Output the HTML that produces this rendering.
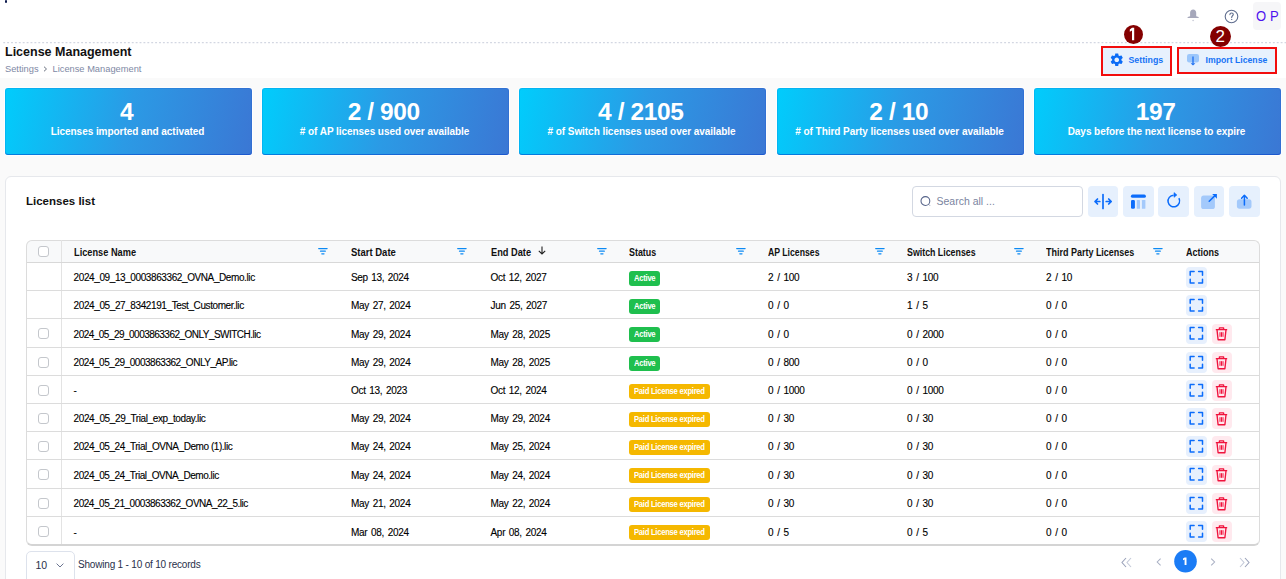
<!DOCTYPE html>
<html><head><meta charset="utf-8"><style>
*{box-sizing:border-box;margin:0;padding:0}
html,body{width:1286px;height:579px;overflow:hidden;background:#fff;font-family:"Liberation Sans",sans-serif;position:relative}
.a{position:absolute}
.ic{position:absolute;display:block}
#gray{position:absolute;left:0;top:78px;width:1286px;height:501px;background:#fafafa}
#dots{position:absolute;left:3.2px;top:42px;width:1283px;height:1.4px;background:repeating-linear-gradient(90deg,#d6dae4 0 2px,transparent 2px 3.889px)}
.title{position:absolute;left:5px;top:44.5px;font-size:12.5px;font-weight:700;color:#111;white-space:nowrap}
.crumb{position:absolute;top:63.8px;font-size:9.3px;color:#8089a5;white-space:nowrap}
.redbox{position:absolute;border:2px solid #f20d0d;background:#e7f1fd}
.btntxt{position:absolute;font-size:9.3px;font-weight:700;color:#1673f6;white-space:nowrap}
.num{position:absolute;border-radius:50%;background:#840000;color:#fff;text-align:center;font-weight:400}
.card{position:absolute;top:88px;width:247px;height:67px;border-radius:3px;background:linear-gradient(102deg,#00cdfc 0%,#2b9ae5 50%,#3b77d4 100%);color:#fff;text-align:center;box-shadow:0 -1px 0 rgba(0,60,200,.45) inset, 0 0 0 1px rgba(0,50,200,.12) inset, 0 0 0 1px rgba(255,255,255,.75)}
.big{position:absolute;left:-3.6px;right:0;top:11px;font-size:24.5px;font-weight:700;line-height:26px;letter-spacing:-0.4px}
.sub{position:absolute;left:-2px;right:0;top:38px;font-size:10px;font-weight:700;line-height:12px;letter-spacing:-0.05px}
#panel{position:absolute;left:5px;top:176px;width:1276px;height:420px;background:#fff;border:1px solid #e6e8ec;border-radius:6px}
.lt{position:absolute;left:26px;top:194.5px;font-size:11.5px;font-weight:700;color:#111;white-space:nowrap}
#search{position:absolute;left:912px;top:186px;width:170.5px;height:30.5px;border:1px solid #d3d8e2;border-radius:4px;background:#fff}
.tb{position:absolute;top:186px;width:30.5px;height:30.5px;border-radius:4px;background:#e6f0fd}
#table{position:absolute;left:26px;top:240px;width:1234px;height:306px;border:1px solid #dcdcdc;border-bottom:2px solid #d4d4d4;border-radius:6px;overflow:hidden}
#thead{position:absolute;left:26px;top:240px;width:1233px;height:22px;background:#f8f9fa;border-radius:6px 6px 0 0}
.vl{position:absolute;left:61px;top:240px;width:1px;height:304px;background:#e3e3e3}
.hl{position:absolute;left:27px;width:1232px;height:1px;background:#dcdcdc}
.hl0{position:absolute;left:27px;top:262px;width:1232px;height:1px;background:#d8d8d8}
.th{position:absolute;top:246px;font-size:10.5px;font-weight:700;color:#111;white-space:nowrap;line-height:13px;transform-origin:0 50%}
.td{position:absolute;font-size:10px;color:#000;-webkit-text-stroke:0.12px #000;white-space:nowrap;letter-spacing:-0.38px;line-height:13px}
.cb{position:absolute;width:11px;height:11.2px;border:1px solid #c4c7cc;border-radius:3px;background:#fff}
.badge{position:absolute;height:15.2px;border-radius:3px;color:#fff;font-size:8.6px;font-weight:700;line-height:15.2px;padding-left:4.6px;white-space:nowrap;letter-spacing:-0.3px}
.badge span{display:inline-block;transform:scaleX(0.89);transform-origin:0 50%}
.badge.g{background:#1fbf4e}
.badge.y{background:#f5b800}
.act{position:absolute;width:20.5px;height:20.5px;border-radius:4px;display:flex;align-items:center;justify-content:center}
.act.b{background:#e7f0fd}
.act.r{background:#ffe9ee}
#sel{position:absolute;left:26px;top:550.5px;width:48.5px;height:40px;border:1px solid #dde2ec;border-radius:5px;background:#fff}
.ft{position:absolute;font-size:10px;color:#28304a;white-space:nowrap;letter-spacing:-0.2px}
.pg{position:absolute;left:1174px;top:550.3px;width:22.8px;height:22.5px;border-radius:50%;background:#1b7cf5;color:#fff;font-size:11px;font-weight:700;text-align:center;line-height:22.5px}
</style></head><body>
<div class="a" style="left:4.5px;top:0;width:2px;height:2.5px;background:#0d1a4d;border-radius:1px"></div>
<!-- top icons -->
<svg class="ic" style="left:1187px;top:9px" width="12" height="13" viewBox="0 0 12 13"><path d="M6.15 0.6c1.8 0 3.05 1.3 3.05 3.2v3.5l2.3 0.6c0.4 0.1 0.4 1-0.1 1H0.9c-0.5 0-0.5-0.9-0.1-1l2.3-0.6V3.8c0-1.9 1.25-3.2 3.05-3.2z" fill="#a6a8bb"/><ellipse cx="6.1" cy="11.6" rx="1" ry="0.75" fill="#cfd1dc"/></svg>
<svg class="ic" style="left:1224.4px;top:9px" width="15" height="15" viewBox="0 0 15 15" fill="none"><circle cx="7.5" cy="7.5" r="6.3" stroke="#5f6d8e" stroke-width="1.1"/><path d="M5.9 5.6c0-1 0.7-1.6 1.7-1.6s1.7 0.6 1.7 1.5c0 1.2-1.6 1.3-1.6 2.7v0.3" stroke="#5f6d8e" stroke-width="1.1" stroke-linecap="round"/><circle cx="7.7" cy="10.4" r="0.65" fill="#5f6d8e"/></svg>
<div class="a" style="left:1253px;top:1.8px;width:28px;height:28px;background:#f6f6f8;border-radius:4px"></div>
<div class="a" style="left:1255.5px;top:7.5px;font-size:14.5px;color:#4f12ef;line-height:16px;transform:scaleX(0.9);transform-origin:0 0">O</div><div class="a" style="left:1270.2px;top:7.5px;font-size:14.5px;color:#4f12ef;line-height:16px;transform:scaleX(0.9);transform-origin:0 0">P</div>
<svg class="ic" style="left:0;top:42px" width="1286" height="2" viewBox="0 0 1286 2"><path d="M3.25 0h1.9v1.3h-1.9zM7.14 0h1.9v1.3h-1.9zM11.04 0h1.9v1.3h-1.9zM14.93 0h1.9v1.3h-1.9zM18.83 0h1.9v1.3h-1.9zM22.72 0h1.9v1.3h-1.9zM26.62 0h1.9v1.3h-1.9zM30.51 0h1.9v1.3h-1.9zM34.41 0h1.9v1.3h-1.9zM38.30 0h1.9v1.3h-1.9zM42.20 0h1.9v1.3h-1.9zM46.09 0h1.9v1.3h-1.9zM49.98 0h1.9v1.3h-1.9zM53.88 0h1.9v1.3h-1.9zM57.77 0h1.9v1.3h-1.9zM61.67 0h1.9v1.3h-1.9zM65.56 0h1.9v1.3h-1.9zM69.46 0h1.9v1.3h-1.9zM73.35 0h1.9v1.3h-1.9zM77.25 0h1.9v1.3h-1.9zM81.14 0h1.9v1.3h-1.9zM85.03 0h1.9v1.3h-1.9zM88.93 0h1.9v1.3h-1.9zM92.82 0h1.9v1.3h-1.9zM96.72 0h1.9v1.3h-1.9zM100.61 0h1.9v1.3h-1.9zM104.51 0h1.9v1.3h-1.9zM108.40 0h1.9v1.3h-1.9zM112.30 0h1.9v1.3h-1.9zM116.19 0h1.9v1.3h-1.9zM120.08 0h1.9v1.3h-1.9zM123.98 0h1.9v1.3h-1.9zM127.87 0h1.9v1.3h-1.9zM131.77 0h1.9v1.3h-1.9zM135.66 0h1.9v1.3h-1.9zM139.56 0h1.9v1.3h-1.9zM143.45 0h1.9v1.3h-1.9zM147.35 0h1.9v1.3h-1.9zM151.24 0h1.9v1.3h-1.9zM155.14 0h1.9v1.3h-1.9zM159.03 0h1.9v1.3h-1.9zM162.92 0h1.9v1.3h-1.9zM166.82 0h1.9v1.3h-1.9zM170.71 0h1.9v1.3h-1.9zM174.61 0h1.9v1.3h-1.9zM178.50 0h1.9v1.3h-1.9zM182.40 0h1.9v1.3h-1.9zM186.29 0h1.9v1.3h-1.9zM190.19 0h1.9v1.3h-1.9zM194.08 0h1.9v1.3h-1.9zM197.97 0h1.9v1.3h-1.9zM201.87 0h1.9v1.3h-1.9zM205.76 0h1.9v1.3h-1.9zM209.66 0h1.9v1.3h-1.9zM213.55 0h1.9v1.3h-1.9zM217.45 0h1.9v1.3h-1.9zM221.34 0h1.9v1.3h-1.9zM225.24 0h1.9v1.3h-1.9zM229.13 0h1.9v1.3h-1.9zM233.03 0h1.9v1.3h-1.9zM236.92 0h1.9v1.3h-1.9zM240.81 0h1.9v1.3h-1.9zM244.71 0h1.9v1.3h-1.9zM248.60 0h1.9v1.3h-1.9zM252.50 0h1.9v1.3h-1.9zM256.39 0h1.9v1.3h-1.9zM260.29 0h1.9v1.3h-1.9zM264.18 0h1.9v1.3h-1.9zM268.08 0h1.9v1.3h-1.9zM271.97 0h1.9v1.3h-1.9zM275.87 0h1.9v1.3h-1.9zM279.76 0h1.9v1.3h-1.9zM283.65 0h1.9v1.3h-1.9zM287.55 0h1.9v1.3h-1.9zM291.44 0h1.9v1.3h-1.9zM295.34 0h1.9v1.3h-1.9zM299.23 0h1.9v1.3h-1.9zM303.13 0h1.9v1.3h-1.9zM307.02 0h1.9v1.3h-1.9zM310.92 0h1.9v1.3h-1.9zM314.81 0h1.9v1.3h-1.9zM318.70 0h1.9v1.3h-1.9zM322.60 0h1.9v1.3h-1.9zM326.49 0h1.9v1.3h-1.9zM330.39 0h1.9v1.3h-1.9zM334.28 0h1.9v1.3h-1.9zM338.18 0h1.9v1.3h-1.9zM342.07 0h1.9v1.3h-1.9zM345.97 0h1.9v1.3h-1.9zM349.86 0h1.9v1.3h-1.9zM353.75 0h1.9v1.3h-1.9zM357.65 0h1.9v1.3h-1.9zM361.54 0h1.9v1.3h-1.9zM365.44 0h1.9v1.3h-1.9zM369.33 0h1.9v1.3h-1.9zM373.23 0h1.9v1.3h-1.9zM377.12 0h1.9v1.3h-1.9zM381.02 0h1.9v1.3h-1.9zM384.91 0h1.9v1.3h-1.9zM388.81 0h1.9v1.3h-1.9zM392.70 0h1.9v1.3h-1.9zM396.59 0h1.9v1.3h-1.9zM400.49 0h1.9v1.3h-1.9zM404.38 0h1.9v1.3h-1.9zM408.28 0h1.9v1.3h-1.9zM412.17 0h1.9v1.3h-1.9zM416.07 0h1.9v1.3h-1.9zM419.96 0h1.9v1.3h-1.9zM423.86 0h1.9v1.3h-1.9zM427.75 0h1.9v1.3h-1.9zM431.64 0h1.9v1.3h-1.9zM435.54 0h1.9v1.3h-1.9zM439.43 0h1.9v1.3h-1.9zM443.33 0h1.9v1.3h-1.9zM447.22 0h1.9v1.3h-1.9zM451.12 0h1.9v1.3h-1.9zM455.01 0h1.9v1.3h-1.9zM458.91 0h1.9v1.3h-1.9zM462.80 0h1.9v1.3h-1.9zM466.70 0h1.9v1.3h-1.9zM470.59 0h1.9v1.3h-1.9zM474.48 0h1.9v1.3h-1.9zM478.38 0h1.9v1.3h-1.9zM482.27 0h1.9v1.3h-1.9zM486.17 0h1.9v1.3h-1.9zM490.06 0h1.9v1.3h-1.9zM493.96 0h1.9v1.3h-1.9zM497.85 0h1.9v1.3h-1.9zM501.75 0h1.9v1.3h-1.9zM505.64 0h1.9v1.3h-1.9zM509.53 0h1.9v1.3h-1.9zM513.43 0h1.9v1.3h-1.9zM517.32 0h1.9v1.3h-1.9zM521.22 0h1.9v1.3h-1.9zM525.11 0h1.9v1.3h-1.9zM529.01 0h1.9v1.3h-1.9zM532.90 0h1.9v1.3h-1.9zM536.80 0h1.9v1.3h-1.9zM540.69 0h1.9v1.3h-1.9zM544.59 0h1.9v1.3h-1.9zM548.48 0h1.9v1.3h-1.9zM552.37 0h1.9v1.3h-1.9zM556.27 0h1.9v1.3h-1.9zM560.16 0h1.9v1.3h-1.9zM564.06 0h1.9v1.3h-1.9zM567.95 0h1.9v1.3h-1.9zM571.85 0h1.9v1.3h-1.9zM575.74 0h1.9v1.3h-1.9zM579.64 0h1.9v1.3h-1.9zM583.53 0h1.9v1.3h-1.9zM587.42 0h1.9v1.3h-1.9zM591.32 0h1.9v1.3h-1.9zM595.21 0h1.9v1.3h-1.9zM599.11 0h1.9v1.3h-1.9zM603.00 0h1.9v1.3h-1.9zM606.90 0h1.9v1.3h-1.9zM610.79 0h1.9v1.3h-1.9zM614.69 0h1.9v1.3h-1.9zM618.58 0h1.9v1.3h-1.9zM622.48 0h1.9v1.3h-1.9zM626.37 0h1.9v1.3h-1.9zM630.26 0h1.9v1.3h-1.9zM634.16 0h1.9v1.3h-1.9zM638.05 0h1.9v1.3h-1.9zM641.95 0h1.9v1.3h-1.9zM645.84 0h1.9v1.3h-1.9zM649.74 0h1.9v1.3h-1.9zM653.63 0h1.9v1.3h-1.9zM657.53 0h1.9v1.3h-1.9zM661.42 0h1.9v1.3h-1.9zM665.31 0h1.9v1.3h-1.9zM669.21 0h1.9v1.3h-1.9zM673.10 0h1.9v1.3h-1.9zM677.00 0h1.9v1.3h-1.9zM680.89 0h1.9v1.3h-1.9zM684.79 0h1.9v1.3h-1.9zM688.68 0h1.9v1.3h-1.9zM692.58 0h1.9v1.3h-1.9zM696.47 0h1.9v1.3h-1.9zM700.37 0h1.9v1.3h-1.9zM704.26 0h1.9v1.3h-1.9zM708.15 0h1.9v1.3h-1.9zM712.05 0h1.9v1.3h-1.9zM715.94 0h1.9v1.3h-1.9zM719.84 0h1.9v1.3h-1.9zM723.73 0h1.9v1.3h-1.9zM727.63 0h1.9v1.3h-1.9zM731.52 0h1.9v1.3h-1.9zM735.42 0h1.9v1.3h-1.9zM739.31 0h1.9v1.3h-1.9zM743.20 0h1.9v1.3h-1.9zM747.10 0h1.9v1.3h-1.9zM750.99 0h1.9v1.3h-1.9zM754.89 0h1.9v1.3h-1.9zM758.78 0h1.9v1.3h-1.9zM762.68 0h1.9v1.3h-1.9zM766.57 0h1.9v1.3h-1.9zM770.47 0h1.9v1.3h-1.9zM774.36 0h1.9v1.3h-1.9zM778.26 0h1.9v1.3h-1.9zM782.15 0h1.9v1.3h-1.9zM786.04 0h1.9v1.3h-1.9zM789.94 0h1.9v1.3h-1.9zM793.83 0h1.9v1.3h-1.9zM797.73 0h1.9v1.3h-1.9zM801.62 0h1.9v1.3h-1.9zM805.52 0h1.9v1.3h-1.9zM809.41 0h1.9v1.3h-1.9zM813.31 0h1.9v1.3h-1.9zM817.20 0h1.9v1.3h-1.9zM821.09 0h1.9v1.3h-1.9zM824.99 0h1.9v1.3h-1.9zM828.88 0h1.9v1.3h-1.9zM832.78 0h1.9v1.3h-1.9zM836.67 0h1.9v1.3h-1.9zM840.57 0h1.9v1.3h-1.9zM844.46 0h1.9v1.3h-1.9zM848.36 0h1.9v1.3h-1.9zM852.25 0h1.9v1.3h-1.9zM856.15 0h1.9v1.3h-1.9zM860.04 0h1.9v1.3h-1.9zM863.93 0h1.9v1.3h-1.9zM867.83 0h1.9v1.3h-1.9zM871.72 0h1.9v1.3h-1.9zM875.62 0h1.9v1.3h-1.9zM879.51 0h1.9v1.3h-1.9zM883.41 0h1.9v1.3h-1.9zM887.30 0h1.9v1.3h-1.9zM891.20 0h1.9v1.3h-1.9zM895.09 0h1.9v1.3h-1.9zM898.99 0h1.9v1.3h-1.9zM902.88 0h1.9v1.3h-1.9zM906.77 0h1.9v1.3h-1.9zM910.67 0h1.9v1.3h-1.9zM914.56 0h1.9v1.3h-1.9zM918.46 0h1.9v1.3h-1.9zM922.35 0h1.9v1.3h-1.9zM926.25 0h1.9v1.3h-1.9zM930.14 0h1.9v1.3h-1.9zM934.04 0h1.9v1.3h-1.9zM937.93 0h1.9v1.3h-1.9zM941.82 0h1.9v1.3h-1.9zM945.72 0h1.9v1.3h-1.9zM949.61 0h1.9v1.3h-1.9zM953.51 0h1.9v1.3h-1.9zM957.40 0h1.9v1.3h-1.9zM961.30 0h1.9v1.3h-1.9zM965.19 0h1.9v1.3h-1.9zM969.09 0h1.9v1.3h-1.9zM972.98 0h1.9v1.3h-1.9zM976.88 0h1.9v1.3h-1.9zM980.77 0h1.9v1.3h-1.9zM984.66 0h1.9v1.3h-1.9zM988.56 0h1.9v1.3h-1.9zM992.45 0h1.9v1.3h-1.9zM996.35 0h1.9v1.3h-1.9zM1000.24 0h1.9v1.3h-1.9zM1004.14 0h1.9v1.3h-1.9zM1008.03 0h1.9v1.3h-1.9zM1011.93 0h1.9v1.3h-1.9zM1015.82 0h1.9v1.3h-1.9zM1019.71 0h1.9v1.3h-1.9zM1023.61 0h1.9v1.3h-1.9zM1027.50 0h1.9v1.3h-1.9zM1031.40 0h1.9v1.3h-1.9zM1035.29 0h1.9v1.3h-1.9zM1039.19 0h1.9v1.3h-1.9zM1043.08 0h1.9v1.3h-1.9zM1046.98 0h1.9v1.3h-1.9zM1050.87 0h1.9v1.3h-1.9zM1054.76 0h1.9v1.3h-1.9zM1058.66 0h1.9v1.3h-1.9zM1062.55 0h1.9v1.3h-1.9zM1066.45 0h1.9v1.3h-1.9zM1070.34 0h1.9v1.3h-1.9zM1074.24 0h1.9v1.3h-1.9zM1078.13 0h1.9v1.3h-1.9zM1082.03 0h1.9v1.3h-1.9zM1085.92 0h1.9v1.3h-1.9zM1089.82 0h1.9v1.3h-1.9zM1093.71 0h1.9v1.3h-1.9zM1097.60 0h1.9v1.3h-1.9zM1101.50 0h1.9v1.3h-1.9zM1105.39 0h1.9v1.3h-1.9zM1109.29 0h1.9v1.3h-1.9zM1113.18 0h1.9v1.3h-1.9zM1117.08 0h1.9v1.3h-1.9zM1120.97 0h1.9v1.3h-1.9zM1124.87 0h1.9v1.3h-1.9zM1128.76 0h1.9v1.3h-1.9zM1132.65 0h1.9v1.3h-1.9zM1136.55 0h1.9v1.3h-1.9zM1140.44 0h1.9v1.3h-1.9zM1144.34 0h1.9v1.3h-1.9zM1148.23 0h1.9v1.3h-1.9zM1152.13 0h1.9v1.3h-1.9zM1156.02 0h1.9v1.3h-1.9zM1159.92 0h1.9v1.3h-1.9zM1163.81 0h1.9v1.3h-1.9zM1167.71 0h1.9v1.3h-1.9zM1171.60 0h1.9v1.3h-1.9zM1175.49 0h1.9v1.3h-1.9zM1179.39 0h1.9v1.3h-1.9zM1183.28 0h1.9v1.3h-1.9zM1187.18 0h1.9v1.3h-1.9zM1191.07 0h1.9v1.3h-1.9zM1194.97 0h1.9v1.3h-1.9zM1198.86 0h1.9v1.3h-1.9zM1202.76 0h1.9v1.3h-1.9zM1206.65 0h1.9v1.3h-1.9zM1210.54 0h1.9v1.3h-1.9zM1214.44 0h1.9v1.3h-1.9zM1218.33 0h1.9v1.3h-1.9zM1222.23 0h1.9v1.3h-1.9zM1226.12 0h1.9v1.3h-1.9zM1230.02 0h1.9v1.3h-1.9zM1233.91 0h1.9v1.3h-1.9zM1237.81 0h1.9v1.3h-1.9zM1241.70 0h1.9v1.3h-1.9zM1245.60 0h1.9v1.3h-1.9zM1249.49 0h1.9v1.3h-1.9zM1253.38 0h1.9v1.3h-1.9zM1257.28 0h1.9v1.3h-1.9zM1261.17 0h1.9v1.3h-1.9zM1265.07 0h1.9v1.3h-1.9zM1268.96 0h1.9v1.3h-1.9zM1272.86 0h1.9v1.3h-1.9zM1276.75 0h1.9v1.3h-1.9zM1280.65 0h1.9v1.3h-1.9zM1284.54 0h1.9v1.3h-1.9zM1288.43 0h1.9v1.3h-1.9z" fill="#d3d7e2"/></svg>
<div class="title">License Management</div>
<div class="crumb" style="left:5px">Settings</div>
<svg class="ic" style="left:43.3px;top:65.6px" width="5" height="6" viewBox="0 0 5 6" fill="none"><path d="M1 0.7l2.5 2.3L1 5.3" stroke="#6b7280" stroke-width="1"/></svg>
<div class="crumb" style="left:52.5px">License Management</div>
<div id="gray"></div>
<!-- buttons -->
<div class="redbox" style="left:1101px;top:46px;width:71px;height:30px"></div>
<svg class="ic" style="left:1108.5px;top:51.8px" width="15.5" height="15.5" viewBox="0 0 24 24"><path fill="#0b6cf6" d="M19.14 12.94c.04-.3.06-.61.06-.94 0-.32-.02-.64-.07-.94l2.03-1.58a.49.49 0 0 0 .12-.61l-1.92-3.32a.488.488 0 0 0-.59-.22l-2.39.96c-.5-.38-1.03-.7-1.62-.94l-.36-2.54a.484.484 0 0 0-.48-.41h-3.84c-.24 0-.43.17-.47.41l-.36 2.54c-.59.24-1.13.57-1.62.94l-2.39-.96c-.22-.08-.47 0-.59.22L2.74 8.87c-.12.21-.08.47.12.61l2.03 1.58c-.05.3-.09.63-.09.94s.02.64.07.94l-2.03 1.58a.49.49 0 0 0-.12.61l1.92 3.32c.12.22.37.29.59.22l2.39-.96c.5.38 1.03.7 1.62.94l.36 2.54c.05.24.24.41.48.41h3.84c.24 0 .44-.17.47-.41l.36-2.54c.59-.24 1.13-.56 1.62-.94l2.39.96c.22.08.47 0 .59-.22l1.92-3.32c.12-.22.07-.47-.12-.61l-2.01-1.58zM12 15.6c-1.98 0-3.6-1.62-3.6-3.6s1.62-3.6 3.6-3.6 3.6 1.62 3.6 3.6-1.62 3.6-3.6 3.6z"/></svg>
<div class="btntxt" style="left:1128.5px;top:55px;font-size:8.8px">Settings</div>
<div class="redbox" style="left:1177px;top:47px;width:100px;height:27px"></div>
<svg class="ic" style="left:1187px;top:54px" width="12" height="12" viewBox="0 0 12 12"><rect x="0" y="0" width="12" height="8.5" rx="2.2" fill="#9cc7fb"/><path d="M6 2.5v7" stroke="#1d6ff2" stroke-width="1.3"/><path d="M3.6 9.2L6 11.6l2.4-2.4z" fill="#1d6ff2"/></svg>
<div class="btntxt" style="left:1205.5px;top:55px;font-size:8.7px">Import License</div>
<svg class="ic" style="left:1124px;top:25px" width="19" height="19" viewBox="0 0 19 19"><circle cx="9.5" cy="9.5" r="9.5" fill="#840000"/><path d="M8 2.8h2.2v12.4H8V5.5L5.8 6.7V4.5z" fill="#fff"/></svg>
<div class="num" style="left:1209.8px;top:26px;width:21px;height:20.8px;font-size:17px;line-height:21px">2</div>
<!-- cards -->
<div class="card" style="left:5px"><div class="big">4</div><div class="sub">Licenses imported and activated</div></div>
<div class="card" style="left:262px"><div class="big">2 / 900</div><div class="sub"># of AP licenses used over available</div></div>
<div class="card" style="left:519px"><div class="big">4 / 2105</div><div class="sub"># of Switch licenses used over available</div></div>
<div class="card" style="left:777px"><div class="big">2 / 10</div><div class="sub"># of Third Party licenses used over available</div></div>
<div class="card" style="left:1034px"><div class="big">197</div><div class="sub">Days before the next license to expire</div></div>
<!-- panel -->
<div id="panel"></div>
<div class="lt">Licenses list</div>
<div id="search"></div>
<svg class="ic" style="left:920px;top:195.5px" width="12" height="11" viewBox="0 0 12 11" fill="none"><circle cx="5.4" cy="5" r="4.4" stroke="#56648a" stroke-width="1.05"/><path d="M8.7 8.4l1.1 1.1" stroke="#56648a" stroke-width="0.9"/></svg>
<div class="a" style="left:936.5px;top:195px;font-size:10.5px;color:#7a84a0;white-space:nowrap;letter-spacing:0px">Search all ...</div>
<div class="tb" style="left:1087.8px"></div>
<div class="tb" style="left:1123.1px"></div>
<div class="tb" style="left:1158.3px"></div>
<div class="tb" style="left:1193.5px"></div>
<div class="tb" style="left:1229px"></div>
<svg class="ic" style="left:1093px;top:193px" width="20" height="17" viewBox="0 0 20 17" fill="none" stroke="#0b6cfb" stroke-width="1.7" stroke-linecap="round" stroke-linejoin="round"><path d="M10 1.5v14"/><path d="M2 8.5h4.8M4.5 6L2 8.5 4.5 11M13.2 8.5h5M15.7 6l2.5 2.5-2.5 2.5"/></svg>
<svg class="ic" style="left:1130px;top:194px" width="17" height="16" viewBox="0 0 17 16"><rect x="0.9" y="0.6" width="15" height="3.2" rx="1.6" fill="#0b6cfb"/><rect x="1" y="6" width="3.9" height="8.8" rx="1.3" fill="#0b6cfb"/><rect x="6.8" y="6" width="3.2" height="8.8" rx="0.6" fill="#a3c9fb"/><rect x="11.9" y="6" width="3.5" height="8.8" rx="0.6" fill="#a3c9fb"/></svg>
<svg class="ic" style="left:1165.6px;top:192.1px" width="16" height="17" viewBox="0 0 16 17"><path d="M12.9 6.2A5.8 5.8 0 1 1 7.6 3.2" fill="none" stroke="#0b6cfb" stroke-width="1.5"/><path d="M8 0.6L10.9 3 8 5.3z" fill="#0b6cfb" stroke="#0b6cfb" stroke-width="0.6" stroke-linejoin="round"/></svg>
<svg class="ic" style="left:1200px;top:193px" width="18" height="17" viewBox="0 0 18 17"><rect x="1.1" y="2.6" width="13.8" height="13.4" rx="2.6" fill="#a3c9fb"/><path d="M9.2 8.3L15.2 2.4" stroke="#0b6cfb" stroke-width="1.5" stroke-linecap="round" fill="none"/><path d="M12.2 1h4.7v4.8z" fill="#0b6cfb"/></svg>
<svg class="ic" style="left:1236px;top:193.5px" width="16" height="16" viewBox="0 0 16 16"><rect x="0.9" y="5.3" width="14.6" height="9.4" rx="2.6" fill="#a3c9fb"/><path d="M8.4 11V2" stroke="#0b6cfb" stroke-width="1.5" stroke-linecap="round" fill="none"/><path d="M5.6 4.2L8.4 1.2l2.8 3" stroke="#0b6cfb" stroke-width="1.5" stroke-linecap="round" stroke-linejoin="round" fill="none"/></svg>
<!-- table -->
<div id="thead"></div>
<div id="table"></div>
<div class="vl"></div>
<div class="hl0"></div>
<div class="th" style="left:73.6px;transform:scaleX(0.878)">License Name</div><div class="th" style="left:351px;transform:scaleX(0.904)">Start Date</div><div class="th" style="left:490.5px;transform:scaleX(0.88)">End Date</div><div class="th" style="left:629px;transform:scaleX(0.848)">Status</div><div class="th" style="left:768px;transform:scaleX(0.827)">AP Licenses</div><div class="th" style="left:907px;transform:scaleX(0.84)">Switch Licenses</div><div class="th" style="left:1046px;transform:scaleX(0.855)">Third Party Licenses</div><div class="th" style="left:1185.8px;transform:scaleX(0.858)">Actions</div><svg class="ic" style="left:318px;top:247px" width="10" height="8" viewBox="0 0 10 8"><path d="M0.7 1.5h8.4M2.5 4.2h4.8M3.8 6.8h2.2" stroke="#0c8af4" stroke-width="1.25" stroke-linecap="round"/></svg><svg class="ic" style="left:457px;top:247px" width="10" height="8" viewBox="0 0 10 8"><path d="M0.7 1.5h8.4M2.5 4.2h4.8M3.8 6.8h2.2" stroke="#0c8af4" stroke-width="1.25" stroke-linecap="round"/></svg><svg class="ic" style="left:596.6px;top:247px" width="10" height="8" viewBox="0 0 10 8"><path d="M0.7 1.5h8.4M2.5 4.2h4.8M3.8 6.8h2.2" stroke="#0c8af4" stroke-width="1.25" stroke-linecap="round"/></svg><svg class="ic" style="left:735.6px;top:247px" width="10" height="8" viewBox="0 0 10 8"><path d="M0.7 1.5h8.4M2.5 4.2h4.8M3.8 6.8h2.2" stroke="#0c8af4" stroke-width="1.25" stroke-linecap="round"/></svg><svg class="ic" style="left:874.6px;top:247px" width="10" height="8" viewBox="0 0 10 8"><path d="M0.7 1.5h8.4M2.5 4.2h4.8M3.8 6.8h2.2" stroke="#0c8af4" stroke-width="1.25" stroke-linecap="round"/></svg><svg class="ic" style="left:1013.6px;top:247px" width="10" height="8" viewBox="0 0 10 8"><path d="M0.7 1.5h8.4M2.5 4.2h4.8M3.8 6.8h2.2" stroke="#0c8af4" stroke-width="1.25" stroke-linecap="round"/></svg><svg class="ic" style="left:1152.6px;top:247px" width="10" height="8" viewBox="0 0 10 8"><path d="M0.7 1.5h8.4M2.5 4.2h4.8M3.8 6.8h2.2" stroke="#0c8af4" stroke-width="1.25" stroke-linecap="round"/></svg><svg class="ic" style="left:537.5px;top:245.8px" width="8" height="9" viewBox="0 0 8 9" fill="none" stroke="#222" stroke-width="1.1"><path d="M4 0.5v7.5M0.8 4.8L4 8l3.2-3.2"/></svg><div class="cb" style="left:38px;top:245.5px"></div>
<div class="td" style="left:73.6px;top:271.30px;letter-spacing:-0.4px;word-spacing:0px">2024_09_13_0003863362_OVNA_Demo.lic</div>
<div class="td" style="left:351px;top:271.30px;letter-spacing:-0.36px;word-spacing:1.2px">Sep 13, 2024</div>
<div class="td" style="left:490.5px;top:271.30px;letter-spacing:-0.3px;word-spacing:1.2px">Oct 12, 2027</div>
<div class="badge g" style="left:629px;top:270.50px;width:31px"><span>Active</span></div>
<div class="td" style="left:768px;top:271.30px;letter-spacing:-0.3px;word-spacing:1.4px">2 / 100</div>
<div class="td" style="left:907px;top:271.30px;letter-spacing:-0.3px;word-spacing:1.4px">3 / 100</div>
<div class="td" style="left:1046px;top:271.30px;letter-spacing:-0.3px;word-spacing:1.4px">2 / 10</div>
<div class="act b" style="left:1186px;top:267.20px"><svg width="15" height="15" viewBox="0 0 15 15" fill="none" stroke="#0b6cfb" stroke-width="1.5" stroke-linecap="round" stroke-linejoin="round"><path d="M1.2 5.2V1.4h3.9M9.6 1.4h3.9v3.8M13.5 9.3v3.8H9.6M5.1 13.1H1.2V9.3"/></svg></div>
<div class="hl" style="top:290px"></div><div class="td" style="left:73.6px;top:299.30px;letter-spacing:-0.4px;word-spacing:0px">2024_05_27_8342191_Test_Customer.lic</div>
<div class="td" style="left:351px;top:299.30px;letter-spacing:-0.3px;word-spacing:1.2px">May 27, 2024</div>
<div class="td" style="left:490.5px;top:299.30px;letter-spacing:-0.3px;word-spacing:1.2px">Jun 25, 2027</div>
<div class="badge g" style="left:629px;top:298.50px;width:31px"><span>Active</span></div>
<div class="td" style="left:768px;top:299.30px;letter-spacing:-0.3px;word-spacing:1.4px">0 / 0</div>
<div class="td" style="left:907px;top:299.30px;letter-spacing:-0.3px;word-spacing:1.4px">1 / 5</div>
<div class="td" style="left:1046px;top:299.30px;letter-spacing:-0.3px;word-spacing:1.4px">0 / 0</div>
<div class="act b" style="left:1186px;top:295.20px"><svg width="15" height="15" viewBox="0 0 15 15" fill="none" stroke="#0b6cfb" stroke-width="1.5" stroke-linecap="round" stroke-linejoin="round"><path d="M1.2 5.2V1.4h3.9M9.6 1.4h3.9v3.8M13.5 9.3v3.8H9.6M5.1 13.1H1.2V9.3"/></svg></div>
<div class="hl" style="top:318px"></div><div class="cb" style="left:38px;top:328.00px"></div>
<div class="td" style="left:73.6px;top:327.80px;letter-spacing:-0.52px;word-spacing:0px">2024_05_29_0003863362_ONLY_SWITCH.lic</div>
<div class="td" style="left:351px;top:327.80px;letter-spacing:-0.3px;word-spacing:1.2px">May 29, 2024</div>
<div class="td" style="left:490.5px;top:327.80px;letter-spacing:-0.3px;word-spacing:1.2px">May 28, 2025</div>
<div class="badge g" style="left:629px;top:327.00px;width:31px"><span>Active</span></div>
<div class="td" style="left:768px;top:327.80px;letter-spacing:-0.3px;word-spacing:1.4px">0 / 0</div>
<div class="td" style="left:907px;top:327.80px;letter-spacing:-0.3px;word-spacing:1.4px">0 / 2000</div>
<div class="td" style="left:1046px;top:327.80px;letter-spacing:-0.3px;word-spacing:1.4px">0 / 0</div>
<div class="act b" style="left:1186px;top:323.70px"><svg width="15" height="15" viewBox="0 0 15 15" fill="none" stroke="#0b6cfb" stroke-width="1.5" stroke-linecap="round" stroke-linejoin="round"><path d="M1.2 5.2V1.4h3.9M9.6 1.4h3.9v3.8M13.5 9.3v3.8H9.6M5.1 13.1H1.2V9.3"/></svg></div>
<div class="act r" style="left:1211.6px;top:323.70px"><svg width="13" height="15" viewBox="0 0 13 15" fill="none" stroke="#f0123c" stroke-width="1.35" stroke-linejoin="round"><path d="M0.8 3.6h11.4M4.4 3.4V1.9h4.2v1.5M2 3.8l1.1 9.9h6.8l1.1-9.9"/><path d="M5 6.2v4.6M6.5 6.2v4.6M8 6.2v4.6" stroke-width="1"/></svg></div>
<div class="hl" style="top:347px"></div><div class="cb" style="left:38px;top:356.50px"></div>
<div class="td" style="left:73.6px;top:356.30px;letter-spacing:-0.46px;word-spacing:0px">2024_05_29_0003863362_ONLY_AP.lic</div>
<div class="td" style="left:351px;top:356.30px;letter-spacing:-0.3px;word-spacing:1.2px">May 29, 2024</div>
<div class="td" style="left:490.5px;top:356.30px;letter-spacing:-0.3px;word-spacing:1.2px">May 28, 2025</div>
<div class="badge g" style="left:629px;top:355.50px;width:31px"><span>Active</span></div>
<div class="td" style="left:768px;top:356.30px;letter-spacing:-0.3px;word-spacing:1.4px">0 / 800</div>
<div class="td" style="left:907px;top:356.30px;letter-spacing:-0.3px;word-spacing:1.4px">0 / 0</div>
<div class="td" style="left:1046px;top:356.30px;letter-spacing:-0.3px;word-spacing:1.4px">0 / 0</div>
<div class="act b" style="left:1186px;top:352.20px"><svg width="15" height="15" viewBox="0 0 15 15" fill="none" stroke="#0b6cfb" stroke-width="1.5" stroke-linecap="round" stroke-linejoin="round"><path d="M1.2 5.2V1.4h3.9M9.6 1.4h3.9v3.8M13.5 9.3v3.8H9.6M5.1 13.1H1.2V9.3"/></svg></div>
<div class="act r" style="left:1211.6px;top:352.20px"><svg width="13" height="15" viewBox="0 0 13 15" fill="none" stroke="#f0123c" stroke-width="1.35" stroke-linejoin="round"><path d="M0.8 3.6h11.4M4.4 3.4V1.9h4.2v1.5M2 3.8l1.1 9.9h6.8l1.1-9.9"/><path d="M5 6.2v4.6M6.5 6.2v4.6M8 6.2v4.6" stroke-width="1"/></svg></div>
<div class="hl" style="top:375px"></div><div class="cb" style="left:38px;top:384.50px"></div>
<div class="td" style="left:73.6px;top:384.30px;letter-spacing:-0.45px;word-spacing:0px">-</div>
<div class="td" style="left:351px;top:384.30px;letter-spacing:-0.3px;word-spacing:1.2px">Oct 13, 2023</div>
<div class="td" style="left:490.5px;top:384.30px;letter-spacing:-0.3px;word-spacing:1.2px">Oct 12, 2024</div>
<div class="badge y" style="left:629px;top:383.50px;width:81px"><span>Paid License expired</span></div>
<div class="td" style="left:768px;top:384.30px;letter-spacing:-0.3px;word-spacing:1.4px">0 / 1000</div>
<div class="td" style="left:907px;top:384.30px;letter-spacing:-0.3px;word-spacing:1.4px">0 / 1000</div>
<div class="td" style="left:1046px;top:384.30px;letter-spacing:-0.3px;word-spacing:1.4px">0 / 0</div>
<div class="act b" style="left:1186px;top:380.20px"><svg width="15" height="15" viewBox="0 0 15 15" fill="none" stroke="#0b6cfb" stroke-width="1.5" stroke-linecap="round" stroke-linejoin="round"><path d="M1.2 5.2V1.4h3.9M9.6 1.4h3.9v3.8M13.5 9.3v3.8H9.6M5.1 13.1H1.2V9.3"/></svg></div>
<div class="act r" style="left:1211.6px;top:380.20px"><svg width="13" height="15" viewBox="0 0 13 15" fill="none" stroke="#f0123c" stroke-width="1.35" stroke-linejoin="round"><path d="M0.8 3.6h11.4M4.4 3.4V1.9h4.2v1.5M2 3.8l1.1 9.9h6.8l1.1-9.9"/><path d="M5 6.2v4.6M6.5 6.2v4.6M8 6.2v4.6" stroke-width="1"/></svg></div>
<div class="hl" style="top:403px"></div><div class="cb" style="left:38px;top:412.50px"></div>
<div class="td" style="left:73.6px;top:412.30px;letter-spacing:-0.39px;word-spacing:0px">2024_05_29_Trial_exp_today.lic</div>
<div class="td" style="left:351px;top:412.30px;letter-spacing:-0.3px;word-spacing:1.2px">May 29, 2024</div>
<div class="td" style="left:490.5px;top:412.30px;letter-spacing:-0.3px;word-spacing:1.2px">May 29, 2024</div>
<div class="badge y" style="left:629px;top:411.50px;width:81px"><span>Paid License expired</span></div>
<div class="td" style="left:768px;top:412.30px;letter-spacing:-0.3px;word-spacing:1.4px">0 / 30</div>
<div class="td" style="left:907px;top:412.30px;letter-spacing:-0.3px;word-spacing:1.4px">0 / 30</div>
<div class="td" style="left:1046px;top:412.30px;letter-spacing:-0.3px;word-spacing:1.4px">0 / 0</div>
<div class="act b" style="left:1186px;top:408.20px"><svg width="15" height="15" viewBox="0 0 15 15" fill="none" stroke="#0b6cfb" stroke-width="1.5" stroke-linecap="round" stroke-linejoin="round"><path d="M1.2 5.2V1.4h3.9M9.6 1.4h3.9v3.8M13.5 9.3v3.8H9.6M5.1 13.1H1.2V9.3"/></svg></div>
<div class="act r" style="left:1211.6px;top:408.20px"><svg width="13" height="15" viewBox="0 0 13 15" fill="none" stroke="#f0123c" stroke-width="1.35" stroke-linejoin="round"><path d="M0.8 3.6h11.4M4.4 3.4V1.9h4.2v1.5M2 3.8l1.1 9.9h6.8l1.1-9.9"/><path d="M5 6.2v4.6M6.5 6.2v4.6M8 6.2v4.6" stroke-width="1"/></svg></div>
<div class="hl" style="top:431px"></div><div class="cb" style="left:38px;top:440.50px"></div>
<div class="td" style="left:73.6px;top:440.30px;letter-spacing:-0.44px;word-spacing:0px">2024_05_24_Trial_OVNA_Demo (1).lic</div>
<div class="td" style="left:351px;top:440.30px;letter-spacing:-0.3px;word-spacing:1.2px">May 24, 2024</div>
<div class="td" style="left:490.5px;top:440.30px;letter-spacing:-0.3px;word-spacing:1.2px">May 25, 2024</div>
<div class="badge y" style="left:629px;top:439.50px;width:81px"><span>Paid License expired</span></div>
<div class="td" style="left:768px;top:440.30px;letter-spacing:-0.3px;word-spacing:1.4px">0 / 30</div>
<div class="td" style="left:907px;top:440.30px;letter-spacing:-0.3px;word-spacing:1.4px">0 / 30</div>
<div class="td" style="left:1046px;top:440.30px;letter-spacing:-0.3px;word-spacing:1.4px">0 / 0</div>
<div class="act b" style="left:1186px;top:436.20px"><svg width="15" height="15" viewBox="0 0 15 15" fill="none" stroke="#0b6cfb" stroke-width="1.5" stroke-linecap="round" stroke-linejoin="round"><path d="M1.2 5.2V1.4h3.9M9.6 1.4h3.9v3.8M13.5 9.3v3.8H9.6M5.1 13.1H1.2V9.3"/></svg></div>
<div class="act r" style="left:1211.6px;top:436.20px"><svg width="13" height="15" viewBox="0 0 13 15" fill="none" stroke="#f0123c" stroke-width="1.35" stroke-linejoin="round"><path d="M0.8 3.6h11.4M4.4 3.4V1.9h4.2v1.5M2 3.8l1.1 9.9h6.8l1.1-9.9"/><path d="M5 6.2v4.6M6.5 6.2v4.6M8 6.2v4.6" stroke-width="1"/></svg></div>
<div class="hl" style="top:459px"></div><div class="cb" style="left:38px;top:469.00px"></div>
<div class="td" style="left:73.6px;top:468.80px;letter-spacing:-0.45px;word-spacing:0px">2024_05_24_Trial_OVNA_Demo.lic</div>
<div class="td" style="left:351px;top:468.80px;letter-spacing:-0.3px;word-spacing:1.2px">May 24, 2024</div>
<div class="td" style="left:490.5px;top:468.80px;letter-spacing:-0.3px;word-spacing:1.2px">May 24, 2024</div>
<div class="badge y" style="left:629px;top:468.00px;width:81px"><span>Paid License expired</span></div>
<div class="td" style="left:768px;top:468.80px;letter-spacing:-0.3px;word-spacing:1.4px">0 / 30</div>
<div class="td" style="left:907px;top:468.80px;letter-spacing:-0.3px;word-spacing:1.4px">0 / 30</div>
<div class="td" style="left:1046px;top:468.80px;letter-spacing:-0.3px;word-spacing:1.4px">0 / 0</div>
<div class="act b" style="left:1186px;top:464.70px"><svg width="15" height="15" viewBox="0 0 15 15" fill="none" stroke="#0b6cfb" stroke-width="1.5" stroke-linecap="round" stroke-linejoin="round"><path d="M1.2 5.2V1.4h3.9M9.6 1.4h3.9v3.8M13.5 9.3v3.8H9.6M5.1 13.1H1.2V9.3"/></svg></div>
<div class="act r" style="left:1211.6px;top:464.70px"><svg width="13" height="15" viewBox="0 0 13 15" fill="none" stroke="#f0123c" stroke-width="1.35" stroke-linejoin="round"><path d="M0.8 3.6h11.4M4.4 3.4V1.9h4.2v1.5M2 3.8l1.1 9.9h6.8l1.1-9.9"/><path d="M5 6.2v4.6M6.5 6.2v4.6M8 6.2v4.6" stroke-width="1"/></svg></div>
<div class="hl" style="top:488px"></div><div class="cb" style="left:38px;top:497.50px"></div>
<div class="td" style="left:73.6px;top:497.30px;letter-spacing:-0.47px;word-spacing:0px">2024_05_21_0003863362_OVNA_22_5.lic</div>
<div class="td" style="left:351px;top:497.30px;letter-spacing:-0.3px;word-spacing:1.2px">May 21, 2024</div>
<div class="td" style="left:490.5px;top:497.30px;letter-spacing:-0.3px;word-spacing:1.2px">May 22, 2024</div>
<div class="badge y" style="left:629px;top:496.50px;width:81px"><span>Paid License expired</span></div>
<div class="td" style="left:768px;top:497.30px;letter-spacing:-0.3px;word-spacing:1.4px">0 / 30</div>
<div class="td" style="left:907px;top:497.30px;letter-spacing:-0.3px;word-spacing:1.4px">0 / 30</div>
<div class="td" style="left:1046px;top:497.30px;letter-spacing:-0.3px;word-spacing:1.4px">0 / 0</div>
<div class="act b" style="left:1186px;top:493.20px"><svg width="15" height="15" viewBox="0 0 15 15" fill="none" stroke="#0b6cfb" stroke-width="1.5" stroke-linecap="round" stroke-linejoin="round"><path d="M1.2 5.2V1.4h3.9M9.6 1.4h3.9v3.8M13.5 9.3v3.8H9.6M5.1 13.1H1.2V9.3"/></svg></div>
<div class="act r" style="left:1211.6px;top:493.20px"><svg width="13" height="15" viewBox="0 0 13 15" fill="none" stroke="#f0123c" stroke-width="1.35" stroke-linejoin="round"><path d="M0.8 3.6h11.4M4.4 3.4V1.9h4.2v1.5M2 3.8l1.1 9.9h6.8l1.1-9.9"/><path d="M5 6.2v4.6M6.5 6.2v4.6M8 6.2v4.6" stroke-width="1"/></svg></div>
<div class="hl" style="top:516px"></div><div class="cb" style="left:38px;top:525.75px"></div>
<div class="td" style="left:73.6px;top:525.55px;letter-spacing:-0.45px;word-spacing:0px">-</div>
<div class="td" style="left:351px;top:525.55px;letter-spacing:-0.3px;word-spacing:1.2px">Mar 08, 2024</div>
<div class="td" style="left:490.5px;top:525.55px;letter-spacing:-0.3px;word-spacing:1.2px">Apr 08, 2024</div>
<div class="badge y" style="left:629px;top:524.75px;width:81px"><span>Paid License expired</span></div>
<div class="td" style="left:768px;top:525.55px;letter-spacing:-0.3px;word-spacing:1.4px">0 / 5</div>
<div class="td" style="left:907px;top:525.55px;letter-spacing:-0.3px;word-spacing:1.4px">0 / 5</div>
<div class="td" style="left:1046px;top:525.55px;letter-spacing:-0.3px;word-spacing:1.4px">0 / 0</div>
<div class="act b" style="left:1186px;top:521.45px"><svg width="15" height="15" viewBox="0 0 15 15" fill="none" stroke="#0b6cfb" stroke-width="1.5" stroke-linecap="round" stroke-linejoin="round"><path d="M1.2 5.2V1.4h3.9M9.6 1.4h3.9v3.8M13.5 9.3v3.8H9.6M5.1 13.1H1.2V9.3"/></svg></div>
<div class="act r" style="left:1211.6px;top:521.45px"><svg width="13" height="15" viewBox="0 0 13 15" fill="none" stroke="#f0123c" stroke-width="1.35" stroke-linejoin="round"><path d="M0.8 3.6h11.4M4.4 3.4V1.9h4.2v1.5M2 3.8l1.1 9.9h6.8l1.1-9.9"/><path d="M5 6.2v4.6M6.5 6.2v4.6M8 6.2v4.6" stroke-width="1"/></svg></div>
<!-- footer -->
<div id="sel"></div>
<div class="ft" style="left:35.5px;top:559px;font-size:10.5px">10</div>
<svg class="ic" style="left:55.5px;top:562.5px" width="8" height="5" viewBox="0 0 8 5" fill="none"><path d="M0.6 0.6L4 4l3.4-3.4" stroke="#6b7490" stroke-width="1"/></svg>
<div class="ft" style="left:78px;top:559px;letter-spacing:-0.19px">Showing 1 - 10 of 10 records</div>
<svg class="ic" style="left:1121px;top:556.5px" width="11" height="11" viewBox="0 0 11 11" fill="none" stroke-width="1.1"><path d="M5 1L1 5.5 5 10" stroke="#9aa2ba"/><path d="M10 1L6 5.5l4 4.5" stroke="#c3c9d8"/></svg>
<svg class="ic" style="left:1155.5px;top:558px" width="6" height="8" viewBox="0 0 6 8" fill="none"><path d="M4.6 0.6L1.2 4l3.4 3.4" stroke="#a9b0c4" stroke-width="1.05"/></svg>
<svg class="ic" style="left:1174px;top:550.3px" width="23" height="23" viewBox="0 0 23 23"><circle cx="11.5" cy="11.3" r="11.3" fill="#1b7cf5"/><path d="M10.6 7.4h1.9v7.6h-1.9V9.4l-1.6 0.9V8.6z" fill="#fff"/></svg>
<svg class="ic" style="left:1210.3px;top:558px" width="6" height="8" viewBox="0 0 6 8" fill="none"><path d="M1.2 0.6L4.6 4 1.2 7.4" stroke="#a9b0c4" stroke-width="1.05"/></svg>
<svg class="ic" style="left:1238.5px;top:556.5px" width="11" height="11" viewBox="0 0 11 11" fill="none" stroke-width="1.1"><path d="M1 1l4 4.5L1 10" stroke="#c3c9d8"/><path d="M6 1l4 4.5L6 10" stroke="#9aa2ba"/></svg>
</body></html>
